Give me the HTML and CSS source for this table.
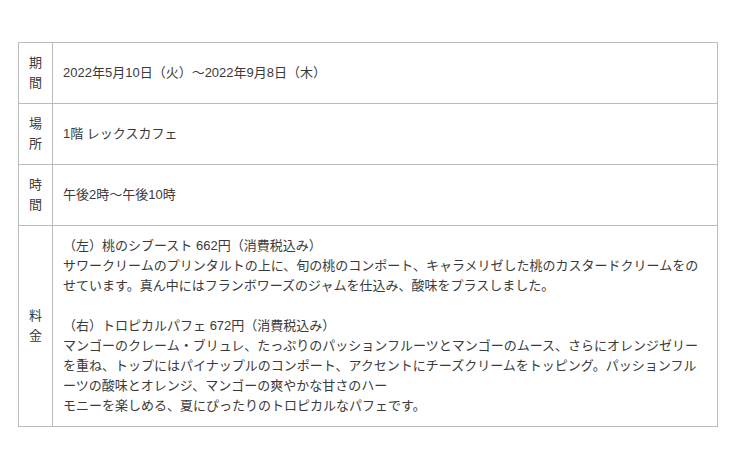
FILE: index.html
```html
<!DOCTYPE html>
<html lang="ja">
<head>
    <meta charset="UTF-8">
    <meta name="viewport" content="width=device-width, initial-scale=1.0">
    <title>開催概要</title>

    <link rel="stylesheet" href="styles.css">
</head>
<body>
<table class="info-table">
    <tr>
        <th>期間</th>
        <td>2022年5月10日（火）〜2022年9月8日（木）</td>
    </tr>
    <tr>
        <th>場所</th>
        <td>1階 レックスカフェ</td>
    </tr>
    <tr>
        <th>時間</th>
        <td>午後2時〜午後10時</td>
    </tr>
    <tr>
        <th>料金</th>
        <td>
            <p>（左）桃のシブースト 662円（消費税込み）<br>サワークリームのプリンタルトの上に、旬の桃のコンポート、キャラメリゼした桃のカスタードクリームをのせています。真ん中にはフランボワーズのジャムを仕込み、酸味をプラスしました。</p>
            <p>（右）トロピカルパフェ 672円（消費税込み）<br>マンゴーのクレーム・ブリュレ、たっぷりのパッションフルーツとマンゴーのムース、さらにオレンジゼリーを重ね、トップにはパイナップルのコンポート、アクセントにチーズクリームをトッピング。パッションフルーツの酸味とオレンジ、マンゴーの爽やかな甘さのハー<br>モニーを楽しめる、夏にぴったりのトロピカルなパフェです。</p>
        </td>
    </tr>
</table>
</body>
</html>
```

FILE: styles.css
```css
* {
    box-sizing: border-box;
    margin: 0;
    padding: 0;
}
body {
    font-family: "Liberation Sans", "Noto Sans CJK JP", sans-serif;
    font-size: 13px;
    line-height: 20px;
    color: #3a3a3a;
    background-color: #fff;
    padding: 42px 22px 0 18px;
}
.info-table {
    width: 700px;
    border-collapse: collapse;
}
.info-table th,
.info-table td {
    border: 1px solid #bcbcbc;
    padding: 10px;
    vertical-align: middle;
    text-align: left;
    font-weight: normal;
}
.info-table th {
    width: 34px;
    text-align: center;
    padding: 10px 10px;
}
.info-table td p + p {
    margin-top: 20px;
}
```
